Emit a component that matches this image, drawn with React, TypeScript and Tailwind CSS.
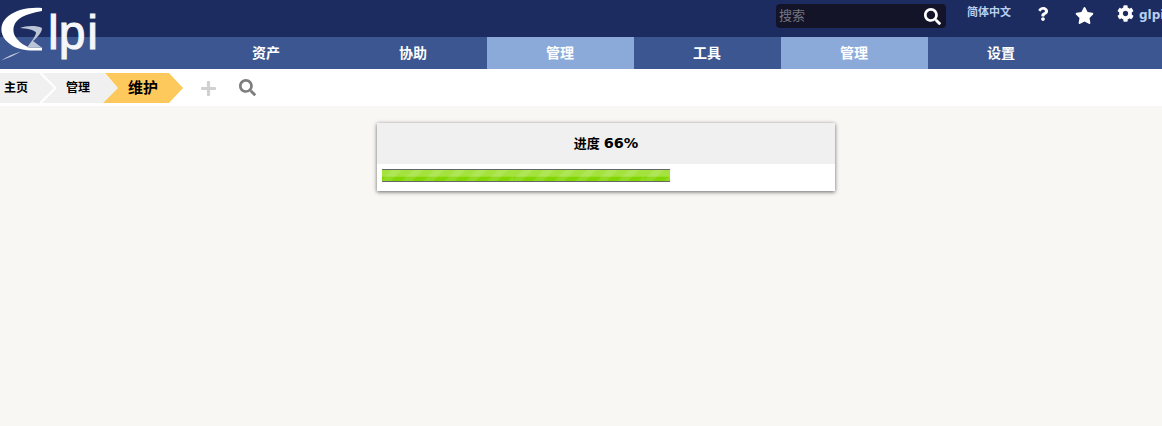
import { FaCog, FaPlus, FaQuestion, FaSearch, FaStar } from 'react-icons/fa';

const cjk = "font-['DejaVu_Sans','Noto_Sans_CJK_SC',sans-serif]";

const navItems = [
  { label: '资产', active: false },
  { label: '协助', active: false },
  { label: '管理', active: true },
  { label: '工具', active: false },
  { label: '管理', active: true },
  { label: '设置', active: false },
];

function Logo() {
  return (
    <div className="absolute left-0 top-0 h-[62px] w-[110px]">
      <svg width="50" height="62" viewBox="0 0 50 62" className="absolute left-0 top-0">
        <path
          d="M42 8 C34 7.5 27 8 20 10 C11 13 4 18 2 25 C0 32 3 39 10 44 C15 48 22 50 30 50.5 L42 50.5 L42 47.5 L29 47.5 C24 45 20 43 18 40 C14 36 12.5 31 14 26 C16 19 24 14 42 11 Z"
          fill="#ffffff"
        />
        <path
          d="M20 28 C25 26 36 25 42 28 C42.5 31 38 37 33 41 L41 47 L27 47.5 C31 42 36 36 36 32.5 C33 29 26 28.5 20 28 Z"
          fill="#bcc5d8"
        />
        <path d="M1 60.5 C7 56.5 14 53.5 21 51.5 C15 55 8 58 1 60.5 Z" fill="#c4cbdc" />
      </svg>
      <span className="absolute left-[48px] top-[5px] font-['Liberation_Sans',sans-serif] text-[48px] leading-[56px] text-[#f4f6fa] [-webkit-text-stroke:1px_#f4f6fa]">
        lp<span className="ml-[2px]">i</span>
      </span>
    </div>
  );
}

function Breadcrumbs() {
  return (
    <div className="flex h-[37px] items-start bg-white pt-[4px] font-bold text-black">
      <div className={`flex h-[30px] w-[54px] items-center bg-[#f0f0f0] pl-[4px] text-[12px] [clip-path:polygon(0_0,39px_0,54px_15px,39px_30px,0_30px)] ${cjk}`}>
        主页
      </div>
      <div className={`-ml-[12px] flex h-[30px] w-[76px] items-center bg-[#f0f0f0] pl-[24px] text-[12px] [clip-path:polygon(0_0,62px_0,76px_15px,62px_30px,0_30px,15px_15px)] ${cjk}`}>
        管理
      </div>
      <div className={`-ml-[15px] flex h-[30px] w-[80px] shrink-0 items-center bg-[#fec95c] pl-[25px] text-[15px] [clip-path:polygon(2px_0,66px_0,80px_15px,66px_30px,0_30px,15px_15px)] ${cjk}`}>
        维护
      </div>
      <FaPlus size={17} className="ml-[17px] mt-[7px] text-[#d0d0d0]" />
      <FaSearch size={17} className="ml-[22px] mt-[6px] text-[#7e7e7e]" />
    </div>
  );
}

export default function App() {
  return (
    <div className="relative h-[426px] w-[1162px] overflow-hidden bg-[#f8f7f3]">
      <header className="flex h-[37px] items-start overflow-hidden bg-[#1d2c60] pl-[776px] pt-[4px]">
        <div className="flex h-[24px] w-[170px] shrink-0 items-center justify-between rounded-[4px] bg-[#131428] pl-[3px] pr-[5px]">
          <span className={`text-[13px] text-[#75757f] ${cjk}`}>搜索</span>
          <FaSearch size={17} className="text-white" />
        </div>
        <span className={`ml-[21px] mt-[2px] shrink-0 text-[11px] font-bold leading-[14px] text-[#b8d0f0] ${cjk}`}>简体中文</span>
        <FaQuestion size={14} className="ml-[25px] mt-[3px] shrink-0 text-white" />
        <FaStar size={19} className="ml-[25px] mt-[2px] shrink-0 text-white" />
        <FaCog size={17} className="ml-[23px] mt-[1px] shrink-0 text-white" />
        <span className="ml-[5px] mt-[4px] shrink-0 font-['DejaVu_Sans',sans-serif] text-[12px] font-bold leading-[14px] text-[#b8d0f0]">glpi</span>
      </header>
      <nav className="flex h-[32px] bg-[#3b5690] pl-[193px]">
        {navItems.map((item, i) => (
          <div
            key={i}
            className={`flex h-[32px] w-[147px] items-center justify-center pr-[1px] text-[14px] font-bold text-white ${cjk} ${item.active ? 'bg-[#8caad9]' : ''}`}
          >
            {item.label}
          </div>
        ))}
      </nav>
      <Breadcrumbs />
      <main className="flex justify-center pl-[50px] pt-[17px]">
        <div className="h-[68px] w-[458px] bg-white shadow-[0_1px_4px_rgba(0,0,0,0.6)]">
          <div className={`flex h-[41px] items-center justify-center gap-[4px] bg-[#f0f0f0] pt-[1px] text-[13px] font-bold text-black ${cjk}`}>
            <span>进度</span>
            <span className="text-[14.5px]">66%</span>
          </div>
          <div className="pl-[5px] pt-[5px]">
            <div className="h-[13px] w-[288px] border-y-[1px] border-[#666] bg-[linear-gradient(180deg,#a4e23e_0%,#a4e23e_58%,#82d604_62%,#82d604_100%)]">
              <div className="h-full w-full bg-[repeating-linear-gradient(135deg,transparent_0,transparent_6px,rgba(255,255,255,0.12)_8px,rgba(255,255,255,0.12)_13px,transparent_15px)] bg-[length:131px_100%]" />
            </div>
          </div>
        </div>
      </main>
      <Logo />
    </div>
  );
}
